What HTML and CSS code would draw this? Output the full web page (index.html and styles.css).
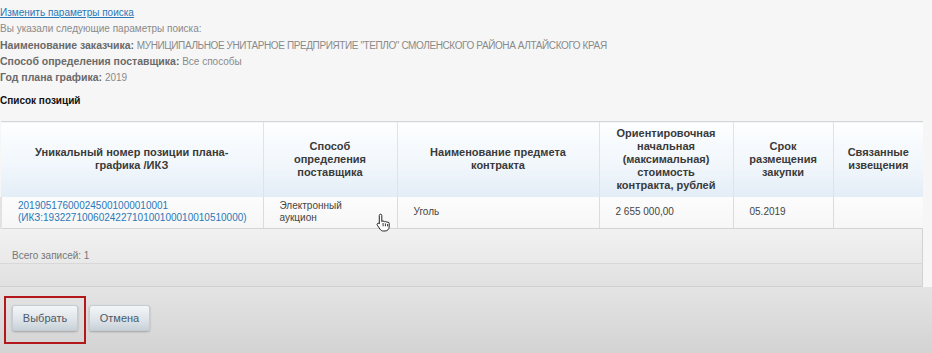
FILE: index.html
```html
<!DOCTYPE html>
<html lang="ru">
<head>
  <meta charset="UTF-8">
  <title>Выбор позиций плана-графика</title>
  <link rel="stylesheet" href="styles.css">
</head>
<body>

<div class="params">
  <a class="change-link" href="#">Изменить параметры поиска</a>
  <p>Вы указали следующие параметры поиска:</p>
  <p><b>Наименование заказчика:</b> <span class="upper">МУНИЦИПАЛЬНОЕ УНИТАРНОЕ ПРЕДПРИЯТИЕ "ТЕПЛО" СМОЛЕНСКОГО РАЙОНА АЛТАЙСКОГО КРАЯ</span></p>
  <p><b>Способ определения поставщика:</b> Все способы</p>
  <p><b>Год плана графика:</b> 2019</p>
</div>

<h3 class="list-title">Список позиций</h3>

<div class="grid-wrap">
  <table class="grid">
    <thead>
      <tr>
        <th class="c1">Уникальный номер позиции плана-<br>графика /ИКЗ</th>
        <th class="c2">Способ определения поставщика</th>
        <th class="c3">Наименование предмета контракта</th>
        <th class="c4">Ориентировочная начальная (максимальная) стоимость контракта, рублей</th>
        <th class="c5">Срок размещения закупки</th>
        <th class="c6">Связанные извещения</th>
      </tr>
    </thead>
    <tbody>
      <tr>
        <td><a href="#">201905176000245001000010001<br>(ИКЗ:193227100602422710100100010010510000)</a></td>
        <td class="cursor-cell">Электронный<br>аукцион
          <svg class="cursor" width="14" height="19" viewBox="0 0 14 19">
            <path d="M4.5 1.2c.8 0 1.3.5 1.3 1.3v6.2c.3-.5.8-.7 1.3-.7.7 0 1.2.4 1.3 1 .3-.4.7-.6 1.2-.6.7 0 1.2.5 1.3 1.1.3-.3.6-.4 1-.4.8 0 1.3.6 1.3 1.4v3.2c0 2.5-1.8 4.3-4.3 4.3H7.3c-1.4 0-2.4-.6-3.2-1.7L1.3 12.2c-.4-.6-.3-1.3.2-1.7.5-.4 1.2-.3 1.7.2l.1.2V2.5c0-.8.5-1.3 1.2-1.3z" fill="#fff" stroke="#222" stroke-width="1"/>
            <path d="M7.1 10v3.3M9.4 10.4v2.9M11.6 11v2.4" stroke="#222" stroke-width="0.9" fill="none"/>
          </svg>
        </td>
        <td>Уголь</td>
        <td>2 655 000,00</td>
        <td>05.2019</td>
        <td></td>
      </tr>
    </tbody>
  </table>
  <div class="total">Всего записей: 1</div>
  <div class="pager"></div>
</div>

<div class="actions">
  <span class="marked">
    <button class="btn">Выбрать</button>
  </span>
  <button class="btn">Отмена</button>
</div>

</body>
</html>
```

FILE: styles.css
```css
html {
  background: #f6f6f6;
}

body {
  margin: 0;
  width: 932px;
  height: 353px;
  overflow: hidden;
  font-family: Tahoma, "Liberation Sans", Arial, sans-serif;
  font-size: 10px;
  color: #8a8a8a;
  background: #f6f6f6;
}

.params {
  padding-top: 5px;
  line-height: 16px;
}

.params p {
  height: 16px;
  margin: 0;
}

.params b {
  font-size: 10.5px;
  color: #6a6a6a;
}

.upper {
  letter-spacing: -0.4px;
}

.change-link {
  display: block;
  height: 16px;
  color: #2a78b8;
  text-decoration: underline;
}

.list-title {
  margin: 8px 0 12px;
  font-size: 10px;
  line-height: 16px;
  color: #111;
}

.grid-wrap {
  width: 922px;
  border-right: 1px solid #d2d2d2;
}

.grid {
  width: 100%;
  border-collapse: collapse;
  table-layout: fixed;
}

.grid th {
  height: 75px;
  padding: 0 10px;
  box-sizing: border-box;
  background: linear-gradient(#fdfeff, #f0f6fb 60%, #e3edf6);
  border-top: 1px solid #d6d6d6;
  border-left: 1px solid #dde3e8;
  color: #3a3a3a;
  font-size: 11px;
  font-weight: bold;
  line-height: 13px;
  text-align: center;
  vertical-align: middle;
}

.grid th:first-child {
  border-left: none;
}

.grid .c1 { width: 262px; }
.grid .c2 { width: 134px; padding: 0 22px; }
.grid .c3 { width: 202px; }
.grid .c4 { width: 134px; padding: 0 14px; }
.grid .c5 { width: 100px; padding: 0 14px; }
.grid .c6 { width: 90px; }

.grid td {
  height: 32px;
  padding: 0 12px 0 16px;
  box-sizing: border-box;
  background: linear-gradient(#fcfcfc, #f6f6f6);
  border-left: 1px solid #dcdcdc;
  border-bottom: 1px solid #d4d4d4;
  color: #444;
  line-height: 12px;
  vertical-align: middle;
}

.grid td:first-child {
  border-left: 2px solid #e2e2e2;
}

.grid td a {
  color: #2a78b8;
  text-decoration: none;
  white-space: nowrap;
}

.cursor-cell {
  position: relative;
}

.cursor {
  position: absolute;
  left: 112px;
  top: 16px;
}

.total {
  height: 35px;
  padding-left: 12px;
  box-sizing: border-box;
  background: linear-gradient(#f1f1f1, #e9e9e9);
  border-bottom: 1px solid #d8d8d8;
  color: #777;
  line-height: 54px;
}

.pager {
  height: 22px;
  background: linear-gradient(#e6e6e6, #e1e1e1);
  border-bottom: 1px solid #cfcfcf;
}

.actions {
  display: flex;
  align-items: flex-start;
  gap: 3px;
  height: 67px;
  padding: 9px 0 0 4px;
  box-sizing: border-box;
  background: linear-gradient(#e4e4e4, #d3d3d3);
}

.marked {
  display: flex;
  padding: 7px 6px 11px 6px;
  border: 2px solid #b3191c;
}

.btn {
  height: 26px;
  padding: 0;
  font-family: inherit;
  font-size: 11px;
  color: #4b5a68;
  background: linear-gradient(#f3f6f8, #dde3e8 60%, #c8d1d9);
  border: 1px solid #c5ccd2;
  border-radius: 3px;
  box-shadow: 0 1px 2px rgba(0, 0, 0, 0.25);
}

.marked .btn {
  width: 66px;
}

.actions > .btn {
  margin-top: 9px;
  width: 61px;
}
```
